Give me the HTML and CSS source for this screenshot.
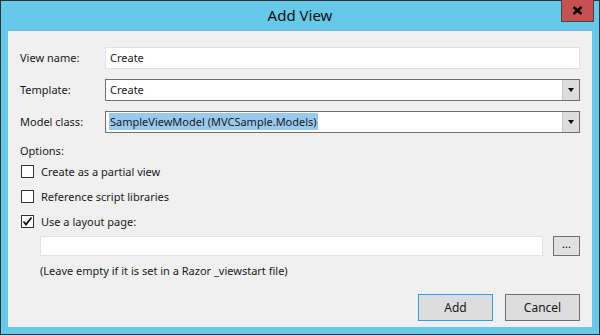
FILE: index.html
```html
<!DOCTYPE html>
<html lang="en">
<head>
  <meta charset="UTF-8">
  <title>Add View</title>
  <link rel="stylesheet" href="styles.css">
</head>
<body>
  <div class="window">
    <div class="title-bar">
      <span class="title">Add View</span>
      <button class="close-btn" aria-label="Close">
        <svg width="11" height="9" viewBox="0 0 11 9"><path d="M1.5 1 L9.5 8 M9.5 1 L1.5 8" stroke="#000" stroke-width="2.4" fill="none"/></svg>
      </button>
    </div>

    <div class="content">
      <div class="form-grid">
        <label class="field-label">View name:</label>
        <div class="text-box">Create</div>

        <label class="field-label">Template:</label>
        <div class="combo">
          <span class="combo-text">Create</span>
          <span class="combo-arrow"></span>
        </div>

        <label class="field-label">Model class:</label>
        <div class="combo">
          <span class="combo-text"><span class="selected">SampleViewModel (MVCSample.Models)</span></span>
          <span class="combo-arrow"></span>
        </div>
      </div>

      <p class="options-title">Options:</p>

      <div class="check-row">
        <span class="check-box"></span>
        <span>Create as a partial view</span>
      </div>
      <div class="check-row">
        <span class="check-box"></span>
        <span>Reference script libraries</span>
      </div>
      <div class="check-row">
        <span class="check-box checked">
          <svg width="11" height="11" viewBox="0 0 11 11"><path d="M1.5 5.5 L4 8.5 L9.5 1.5" stroke="#111" stroke-width="1.8" fill="none"/></svg>
        </span>
        <span>Use a layout page:</span>
      </div>

      <div class="layout-row">
        <div class="text-box layout-box"></div>
        <button class="browse-btn">...</button>
      </div>
      <p class="hint">(Leave empty if it is set in a Razor _viewstart file)</p>

      <div class="button-row">
        <button class="dlg-btn default">Add</button>
        <button class="dlg-btn">Cancel</button>
      </div>
    </div>
  </div>
</body>
</html>
```

FILE: styles.css
```css
* { box-sizing: border-box; }
body {
  margin: 0;
  font-family: 'Noto Sans', 'Open Sans', sans-serif;
  font-size: 11px;
  color: #1a1a1a;
}
.window {
  position: relative;
  width: 600px;
  height: 335px;
  background: #66c9ea;
  border: 1px solid #333;
  padding: 0 7px 7px 7px;
  display: flex;
  flex-direction: column;
}
.title-bar {
  height: 29px;
  display: flex;
  align-items: center;
  justify-content: center;
  flex-shrink: 0;
}
.title {
  font-size: 15px;
  color: #111;
  margin-top: -1px;
}
.close-btn {
  position: absolute;
  top: -1px;
  right: 5px;
  width: 33px;
  height: 22px;
  background: #c75050;
  border: 1px solid #444;
  border-top: none;
  padding: 0;
  display: flex;
  align-items: center;
  justify-content: center;
}
.content {
  flex: 1;
  background: #f0f0f0;
  border-top: 1px solid #7fb4cc;
  padding: 16px 12px 0 12px;
}
.form-grid {
  display: grid;
  grid-template-columns: 85px 1fr;
  row-gap: 10px;
  align-items: center;
}
.field-label { line-height: 16px; }
.text-box {
  height: 22px;
  background: #fff;
  border: 1px solid #e1e1ea;
  padding-left: 4px;
  line-height: 20px;
}
.combo {
  height: 22px;
  background: #fff;
  border: 1px solid #707070;
  display: flex;
}
.combo-text {
  flex: 1;
  padding-left: 4px;
  line-height: 20px;
}
.selected {
  background: #99c9ef;
  display: inline-block;
  line-height: 17px;
  padding: 0 1px;
  margin-left: -1px;
}
.combo-arrow {
  width: 17px;
  background: #dcdcdc;
  border-left: 1px solid #c9c9c9;
  position: relative;
}
.combo-arrow::after {
  content: '';
  position: absolute;
  left: 5px;
  top: 8px;
  border-left: 3px solid transparent;
  border-right: 3px solid transparent;
  border-top: 4px solid #000;
}
.options-title {
  margin: 10px 0 0;
  line-height: 16px;
}
.check-row {
  display: flex;
  align-items: center;
  height: 25px;
  gap: 7px;
  padding-left: 1px;
}
.check-row:first-of-type { margin-top: 5px; }
.check-box {
  width: 13px;
  height: 13px;
  background: #fff;
  border: 1px solid #333;
  display: flex;
  align-items: center;
  justify-content: center;
}
.layout-row {
  display: flex;
  gap: 10px;
  margin-top: 2px;
  padding-left: 20px;
}
.layout-box {
  flex: 1;
  height: 20px;
}
.browse-btn {
  width: 27px;
  height: 20px;
  background: #e1e1e1;
  border: 1px solid #707070;
  font-family: inherit;
  font-size: 11px;
  padding: 0 0 4px;
  line-height: 12px;
}
.hint {
  margin: 7px 0 0 20px;
  line-height: 16px;
}
.button-row {
  display: flex;
  justify-content: flex-end;
  gap: 12px;
  margin-top: 15px;
}
.dlg-btn {
  width: 75px;
  height: 27px;
  background: #dddddd;
  border: 1px solid #707070;
  font-family: inherit;
  font-size: 12px;
  color: #1a1a1a;
}
.dlg-btn.default { border-color: #3399ff; }
```
